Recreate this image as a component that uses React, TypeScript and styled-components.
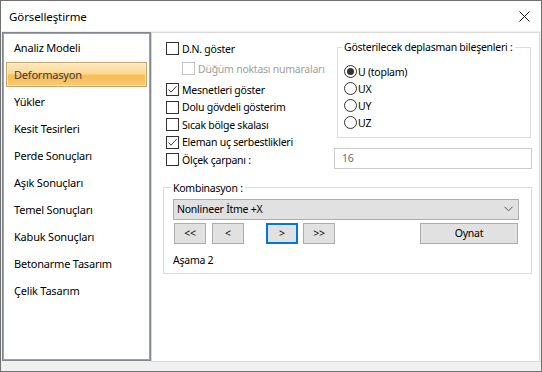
import styled, { createGlobalStyle } from 'styled-components';

const GlobalStyle = createGlobalStyle`
  body {
    margin: 0;
    background: #ffffff;
    font-family: 'Noto Sans', 'Open Sans', sans-serif;
    font-size: 11px;
    color: #000;
  }
  * {
    box-sizing: border-box;
  }
`;

const menuItems = [
  'Analiz Modeli',
  'Deformasyon',
  'Yükler',
  'Kesit Tesirleri',
  'Perde Sonuçları',
  'Aşık Sonuçları',
  'Temel Sonuçları',
  'Kabuk Sonuçları',
  'Betonarme Tasarım',
  'Çelik Tasarım',
];

const checks = [
  { label: 'Mesnetleri göster', checked: true },
  { label: 'Dolu gövdeli gösterim', checked: false },
  { label: 'Sıcak bölge skalası', checked: false },
  { label: 'Eleman uç serbestlikleri', checked: true },
];

const radios = ['U (toplam)', 'UX', 'UY', 'UZ'];

const navButtons = [
  { label: '<<', gap: 1 },
  { label: '<', gap: 6 },
  { label: '>', gap: 22, focused: true },
  { label: '>>', gap: 5 },
];

const CheckMark = () => (
  <svg width="11" height="11" viewBox="0 0 11 11">
    <polyline
      points="1.5,5.5 4,8.2 9.5,2.2"
      fill="none"
      stroke="#3c3c3c"
      strokeWidth="1"
    />
  </svg>
);

const Check = ({
  label,
  checked,
  disabled,
  indent,
  spaced,
}: {
  label: string;
  checked?: boolean;
  disabled?: boolean;
  indent?: boolean;
  spaced?: boolean;
}) => (
  <CheckRow $indent={indent} $disabled={disabled} $spaced={spaced}>
    <CheckBox $disabled={disabled}>{checked && <CheckMark />}</CheckBox>
    {label}
  </CheckRow>
);

const App = () => {
  return (
    <>
      <GlobalStyle />
      <Window>
        <TitleBar>
          <Title>Görselleştirme</Title>
          <svg width="11" height="11" viewBox="0 0 11 11">
            <path d="M0.5 0.5 L10.5 10.5 M10.5 0.5 L0.5 10.5" stroke="#1a1a1a" strokeWidth="1" />
          </svg>
        </TitleBar>
        <Body>
          <SideMenu>
            {menuItems.map((item) => (
              <MenuItem key={item} $active={item === 'Deformasyon'}>
                {item}
              </MenuItem>
            ))}
          </SideMenu>
          <ContentPanel>
            <TopSection>
              <CheckColumn>
                <Check label="D.N. göster" />
                <Check label="Düğüm noktası numaraları" disabled indent />
                {checks.map((c, i) => (
                  <Check key={c.label} label={c.label} checked={c.checked} spaced={i === 0} />
                ))}
                <Check label="Ölçek çarpanı :" />
              </CheckColumn>
              <RightColumn>
                <GroupBox>
                  <Legend>Gösterilecek deplasman bileşenleri :</Legend>
                  {radios.map((r, i) => (
                    <RadioRow key={r}>
                      <RadioCircle $selected={i === 0} />
                      {r}
                    </RadioRow>
                  ))}
                </GroupBox>
                <TextBox>16</TextBox>
              </RightColumn>
            </TopSection>
            <ComboGroup>
              <Legend>Kombinasyon :</Legend>
              <Select>
                Nonlineer İtme +X
                <svg width="9" height="6" viewBox="0 0 9 6">
                  <polyline points="0.5,0.8 4.5,4.8 8.5,0.8" fill="none" stroke="#555" strokeWidth="1" />
                </svg>
              </Select>
              <ButtonRow>
                {navButtons.map((b) => (
                  <NavButton key={b.label} $gap={b.gap} $focused={b.focused}>
                    {b.label}
                  </NavButton>
                ))}
                <PlayButton>Oynat</PlayButton>
              </ButtonRow>
              <StageLabel>Aşama 2</StageLabel>
            </ComboGroup>
          </ContentPanel>
        </Body>
      </Window>
    </>
  );
};

export default App;

const Window = styled.div`
  width: 542px;
  height: 372px;
  border: 1px solid #707070;
  background: #f0f0f0;
  display: flex;
  flex-direction: column;
`;

const TitleBar = styled.div`
  height: 30px;
  flex: none;
  background: #ffffff;
  display: flex;
  align-items: center;
  justify-content: space-between;
  padding: 0 11px 0 8px;
`;

const Title = styled.div`
  font-size: 11.5px;
  letter-spacing: -0.1px;
  color: #000;
  margin-top: 1px;
`;

const Body = styled.div`
  flex: 1;
  display: flex;
  align-items: flex-start;
  padding: 1px 1px 0 1px;
`;

const SideMenu = styled.div`
  width: 149px;
  height: 329px;
  background: #ffffff;
  border: 1px solid #828790;
  box-shadow: inset 1px 1px 0 #a0a0a0, inset -1px -1px 0 #a0a0a0;
  display: flex;
  flex-direction: column;
  gap: 2px;
  padding: 2px 3px 0 3px;
`;

const MenuItem = styled.div<{ $active?: boolean }>`
  height: 25px;
  display: flex;
  align-items: center;
  padding-left: 7px;
  letter-spacing: -0.2px;
  color: ${(p) => (p.$active ? '#3a3a3a' : '#000')};
  border: 1px solid ${(p) => (p.$active ? '#c9a66b' : 'transparent')};
  background: ${(p) =>
    p.$active
      ? 'linear-gradient(to bottom, #fde8c0 0%, #fcd997 45%, #f9bc57 55%, #fbc873 100%)'
      : 'transparent'};
  box-shadow: ${(p) => (p.$active ? 'inset 0 0 0 1px rgba(255, 240, 210, 0.7)' : 'none')};
`;

const ContentPanel = styled.div`
  width: 389px;
  height: 330px;
  background: #ffffff;
  border: 1px solid #d9d9d9;
  padding: 6px 7px 0 11px;
  display: flex;
  flex-direction: column;
  font-size: 10.5px;
  letter-spacing: -0.25px;
`;

const TopSection = styled.div`
  display: flex;
  padding-left: 3px;
  padding-top: 1px;
`;

const CheckColumn = styled.div`
  flex: 1;
  min-width: 0;
  display: flex;
  flex-direction: column;
`;

const CheckRow = styled.div<{ $indent?: boolean; $disabled?: boolean; $spaced?: boolean }>`
  height: 17.5px;
  display: flex;
  align-items: center;
  gap: 3px;
  margin-left: ${(p) => (p.$indent ? '16px' : '0')};
  margin-top: ${(p) => (p.$indent ? '2.5px' : p.$spaced ? '3.5px' : '0')};
  color: ${(p) => (p.$disabled ? '#a0a0a0' : '#000')};
  white-space: nowrap;
`;

const CheckBox = styled.div<{ $disabled?: boolean }>`
  width: 13px;
  height: 13px;
  flex: none;
  border: 1px solid ${(p) => (p.$disabled ? '#c4c4c4' : '#333333')};
  background: #ffffff;
  display: flex;
  align-items: center;
  justify-content: center;
`;

const RightColumn = styled.div`
  width: 198px;
  flex: none;
  display: flex;
  flex-direction: column;
  justify-content: space-between;
`;

const GroupBox = styled.fieldset`
  margin: 0 1px 0 3px;
  padding: 9px 0 6px 6px;
  border: 1px solid #dcdcdc;
  min-width: 0;
`;

const Legend = styled.legend`
  padding: 0 2px;
  margin-left: -2px;
  line-height: 14px;
  color: #000;
  white-space: nowrap;
`;

const RadioRow = styled.div`
  height: 17px;
  display: flex;
  align-items: center;
  gap: 1px;
`;

const RadioCircle = styled.div<{ $selected?: boolean }>`
  width: 13px;
  height: 13px;
  flex: none;
  border-radius: 50%;
  border: 1px solid #333333;
  display: flex;
  align-items: center;
  justify-content: center;
  &::after {
    content: '';
    width: 7px;
    height: 7px;
    border-radius: 50%;
    background: ${(p) => (p.$selected ? '#333333' : 'transparent')};
  }
`;

const TextBox = styled.div`
  height: 21px;
  border: 1px solid #cccccc;
  background: #ffffff;
  color: #6d6d6d;
  display: flex;
  align-items: center;
  padding-left: 7px;
`;

const ComboGroup = styled.fieldset`
  margin: 12px 0 0 0;
  padding: 4px 12px 5px 9px;
  border: 1px solid #dcdcdc;
  min-width: 0;
`;

const Select = styled.div`
  height: 21px;
  background: #e1e1e1;
  border: 1px solid #adadad;
  display: flex;
  align-items: center;
  justify-content: space-between;
  padding: 0 5px 0 3px;
`;

const ButtonRow = styled.div`
  display: flex;
  margin-top: 3px;
  padding-right: 1px;
`;

const NavButton = styled.div<{ $gap: number; $focused?: boolean }>`
  width: 32px;
  height: 21px;
  margin-left: ${(p) => p.$gap}px;
  background: #e1e1e1;
  border: ${(p) => (p.$focused ? '2px solid #0078d7' : '1px solid #adadad')};
  display: flex;
  align-items: center;
  justify-content: center;
  color: #000;
`;

const PlayButton = styled.div`
  width: 98px;
  height: 21px;
  margin-left: auto;
  background: #e1e1e1;
  border: 1px solid #adadad;
  display: flex;
  align-items: center;
  justify-content: center;
`;

const StageLabel = styled.div`
  margin-top: 8px;
  line-height: 16px;
`;
